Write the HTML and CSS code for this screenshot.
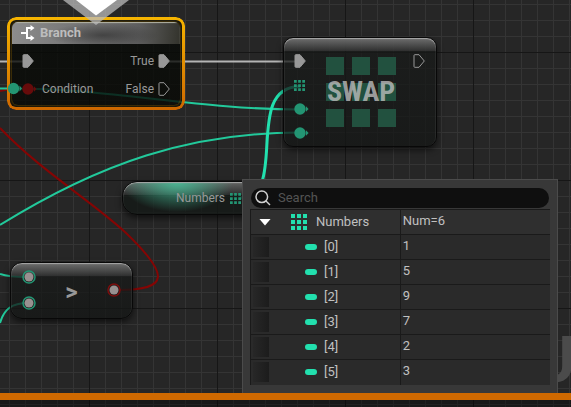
FILE: index.html
```html
<!DOCTYPE html>
<html lang="en">
<head>
<meta charset="utf-8">
<title>Blueprint debugger</title>
<link rel="stylesheet" href="styles.css">
</head>
<body>
<svg class="defs" aria-hidden="true">
  <symbol id="exec" viewBox="0 0 12 14"><path d="M1 1.5Q1 .7 1.8.7H6L11.3 7 6 13.3H1.8Q1 13.3 1 12.5Z"/></symbol>
  <symbol id="pin" viewBox="0 0 16 12"><circle cx="6" cy="6" r="5.7"/><path d="M12 3.2 14.6 6 12 8.8Z"/></symbol>
  <symbol id="array" viewBox="0 0 16 16"><path d="M0 0h4v4H0zM6 0h4v4H6zM12 0h4v4h-4zM0 6h4v4H0zM6 6h4v4H6zM12 6h4v4h-4zM0 12h4v4H0zM6 12h4v4H6zM12 12h4v4h-4z"/></symbol>
  <symbol id="ring" viewBox="0 0 14 14"><circle class="halo" cx="7" cy="7" r="6"/><circle class="core" cx="7" cy="7" r="4.5"/></symbol>
</svg>
<main class="canvas">
  <span class="watermark">U</span>
  <svg class="layer" aria-hidden="true">
    <g fill="none">
      <path class="w-exec" d="M0 61.5H24M165 61.5H300"/>
      <path class="w-bool" d="M0 91 12 88.5M0 128C40 170 90 200 125 232 170 275 170 290 118 290"/>
      <path class="w-int" d="M0 88.5H12C110 88.5 200 109.5 300 109.5M0 225C100 163 190 132.5 300 132.5M0 274C8 277 18 277 28 277M0 323C4 309 12 303 28 303"/>
      <path class="w-array" d="M240 198C290 198 242 86.5 300 86.5"/>
    </g>
  </svg>

  <section class="node branch">
    <div class="branch-body">
      <header class="branch-head">
        <svg width="14" height="16" viewBox="0 0 14 16" fill="none" stroke="#fff" stroke-width="2" aria-hidden="true"><path d="M0 8H5M11 3H6V13H11"/><path d="M9.500 0 13.500 3 9.500 6ZM9.500 10 13.500 13 9.500 16Z" fill="#fff" stroke="none"/></svg>
        <h2>Branch</h2>
      </header>
      <div class="branch-row">
        <svg class="exec on" width="12" height="14"><use href="#exec"/></svg>
        <span class="out">True</span>
        <svg class="exec on" width="12" height="14"><use href="#exec"/></svg>
      </div>
      <div class="branch-row">
        <svg class="pin red" width="16" height="12"><use href="#pin"/></svg>
        <span>Condition</span>
        <span class="out">False</span>
        <svg class="exec" width="12" height="14"><use href="#exec"/></svg>
      </div>
    </div>
  </section>

  <section class="node swap">
    <div class="pins">
      <svg class="exec on" width="12" height="14"><use href="#exec"/></svg>
      <svg class="arr" width="11" height="11"><use href="#array"/></svg>
      <svg class="pin" width="16" height="12"><use href="#pin"/></svg>
      <svg class="pin" width="16" height="12"><use href="#pin"/></svg>
    </div>
    <div class="emblem">
      <i></i><i></i><i></i><i></i><i></i><i></i><i></i><i></i><i></i>
      <h2>SWAP</h2>
    </div>
    <svg class="exec" width="12" height="14"><use href="#exec"/></svg>
  </section>

  <section class="node numbers">
    <span>Numbers</span>
    <svg class="arr" width="11" height="11"><use href="#array"/></svg>
  </section>

  <section class="node greater">
    <div class="rings">
      <svg class="ring" width="14" height="14"><use href="#ring"/></svg>
      <svg class="ring" width="14" height="14"><use href="#ring"/></svg>
    </div>
    <h2>&gt;</h2>
    <svg class="ring red" width="14" height="14"><use href="#ring"/></svg>
  </section>

  <svg class="layer" aria-hidden="true">
    <circle cx="13.500" cy="88.500" r="5.700" fill="#239573"/><path d="M19.500 85.500 22 88.500 19.500 91.500Z" fill="#239573"/>
    <path d="M63 0H129L96 25Z" fill="#bbb" fill-opacity=".75"/>
    <path d="M76 0H117L96 15.500Z" fill="#fff"/>
  </svg>

  <aside class="panel">
    <label class="search">
      <svg width="16" height="16" viewBox="0 0 16 16" fill="none" stroke="#d0d0d0" stroke-width="1.500" aria-hidden="true"><circle cx="6.800" cy="6.800" r="5.800"/><path d="M11 11 15 15"/></svg>
      <input type="search" placeholder="Search" aria-label="Search">
    </label>
    <table>
      <tbody>
        <tr class="top">
          <th scope="row"><div class="cell"><button type="button" aria-label="Collapse Numbers"></button><svg class="bright" width="16" height="16"><use href="#array"/></svg><span>Numbers</span></div></th>
          <td>Num=6</td>
        </tr>
        <tr><th scope="row"><div class="cell"><i class="handle"></i><i class="pill"></i><span>[0]</span></div></th><td>1</td></tr>
        <tr><th scope="row"><div class="cell"><i class="handle"></i><i class="pill"></i><span>[1]</span></div></th><td>5</td></tr>
        <tr><th scope="row"><div class="cell"><i class="handle"></i><i class="pill"></i><span>[2]</span></div></th><td>9</td></tr>
        <tr><th scope="row"><div class="cell"><i class="handle"></i><i class="pill"></i><span>[3]</span></div></th><td>7</td></tr>
        <tr><th scope="row"><div class="cell"><i class="handle"></i><i class="pill"></i><span>[4]</span></div></th><td>2</td></tr>
        <tr><th scope="row"><div class="cell"><i class="handle"></i><i class="pill"></i><span>[5]</span></div></th><td>3</td></tr>
      </tbody>
    </table>
  </aside>
</main>
<footer class="edge"></footer>
</body>
</html>
```
FILE: styles.css
```css
* { box-sizing: border-box; }

body {
  margin: 0;
  min-height: 100vh;
  display: flex;
  flex-direction: column;
  overflow: hidden;
  font: 13px/16px Roboto, "Liberation Sans", sans-serif;
  color: #c0c0c0;
  background-color: #262626;
  background-image:
    linear-gradient(90deg, #161616 1px, transparent 1px),
    linear-gradient(#161616 1px, transparent 1px),
    linear-gradient(90deg, #343434 1px, transparent 1px),
    linear-gradient(#343434 1px, transparent 1px);
  background-size: 128px 128px, 128px 128px, 16px 16px, 16px 16px;
  background-position: 89px 0, 0 52px, 9px 0, 0 4px;
}

h2 { margin: 0; font-size: 13px; line-height: 16px; }
svg { display: block; flex: none; }
.defs { position: absolute; width: 0; height: 0; }

.canvas { position: relative; flex: 1; overflow: hidden; }
.layer { position: absolute; inset: 0; width: 100%; height: 100%; pointer-events: none; }

.edge {
  height: 14px;
  border-top: 7px solid #cf6900;
  background: rgba(0, 0, 0, .35);
}

.watermark {
  position: absolute;
  left: 533px;
  bottom: 0;
  font-size: 64px;
  line-height: 64px;
  font-weight: 700;
  color: #4b4b4b;
}

.w-exec { stroke: #b4b4b4; stroke-width: 2; }
.w-bool { stroke: #850504; stroke-width: 2; }
.w-int { stroke: #22c99b; stroke-width: 2; }
.w-array { stroke: #22e0ae; stroke-width: 3; }

.node {
  position: absolute;
  display: flex;
  font-size: 12px;
  color: #989898;
  border: 1px solid #080808;
  background:
    linear-gradient(rgba(125, 125, 125, .85), rgba(60, 60, 60, .6)) top / 100% 13px no-repeat,
    linear-gradient(rgba(24, 26, 25, .75), rgba(20, 22, 21, .75));
  box-shadow: 0 3px 6px rgba(0, 0, 0, .6), inset 0 1px 1px #a8a8a8;
}

.exec { fill: none; stroke: #989898; }
.exec.on { fill: #989898; }
.pin, .arr { fill: #239573; }
.pin.red { fill: #660b0b; }
.bright { fill: #22e0ae; }
.ring { fill: none; stroke: #239573; stroke-width: 1.5px; }
.ring.red { stroke: #7c0d0d; }
.core { fill: #989090; stroke: none; }

.branch {
  left: 7px;
  top: 17px;
  width: 178px;
  padding: 2px;
  border: 3px solid transparent;
  border-radius: 9px;
  background: linear-gradient(rgba(8, 11, 8, .8), rgba(8, 9, 5, .8)) padding-box;
  box-shadow: none;
}
.branch::before {
  content: "";
  position: absolute;
  inset: -3px;
  border-radius: 9px;
  padding: 3px;
  background: linear-gradient(#f7b500, #cd6700);
  mask: linear-gradient(#000 0 0) content-box exclude, linear-gradient(#000 0 0);
}
.branch-body {
  flex: 1;
  padding-bottom: 5px;
  border-radius: 6px;
  overflow: hidden;
  box-shadow: 0 0 3px #8a6200;
}
.branch-head {
  display: flex;
  align-items: center;
  gap: 5px;
  height: 22px;
  padding-left: 9px;
  color: #bdbdbd;
  background:
    radial-gradient(ellipse 56px 12px at 54% 60%, rgba(40, 40, 40, .6), transparent),
    linear-gradient(95deg, #8c8c8c, #6c6c6c 55%, #5e5e5e 75%, #33332c);
  box-shadow: inset 0 1px 1px #b5b5a5;
}
.branch-row {
  display: flex;
  align-items: center;
  gap: 4px;
  height: 28px;
  padding: 6px 10px 0;
}
.out { margin-left: auto; }

.swap {
  left: 283px;
  top: 37px;
  width: 154px;
  height: 110px;
  padding: 16px 11px 0 10px;
  justify-content: space-between;
  border-radius: 10px;
}
.pins { display: grid; grid-template-rows: 14px 11px 12px 12px; row-gap: 12px; width: 14px; }
.emblem {
  display: grid;
  grid-template-columns: repeat(3, 18px);
  grid-auto-rows: 18px;
  gap: 8px;
  padding-top: 3px;
}
.emblem i { background: #22513f; }
.emblem h2 {
  position: absolute;
  left: 43px;
  top: 38px;
  font: 700 28px/32px "Roboto Condensed", "Liberation Sans Narrow", Roboto, sans-serif;
  color: rgba(190, 190, 190, .8);
}

.numbers {
  left: 122px;
  top: 181px;
  width: 150px;
  height: 34px;
  align-items: center;
  gap: 5px;
  padding-left: 53px;
  border-radius: 15px;
  background:
    radial-gradient(ellipse 56px 30px at 54px 0, rgba(70, 195, 155, .85), transparent),
    linear-gradient(rgba(120, 120, 120, .8), rgba(55, 55, 55, .6)) top / 100% 13px no-repeat,
    rgba(20, 25, 23, .8);
}

.greater {
  left: 10px;
  top: 262px;
  width: 123px;
  height: 57px;
  align-items: center;
  justify-content: space-between;
  padding: 0 11px 2px;
  border-radius: 12px;
}
.rings { display: grid; gap: 12px; }
.greater h2 { font-size: 24px; line-height: 24px; padding-top: 4px; }

.panel {
  position: absolute;
  left: 242px;
  top: 179px;
  width: 316px;
  padding: 8px 7px;
  border: 1px solid #4b4b4b;
  background: #383838;
}
.search {
  display: flex;
  align-items: center;
  gap: 7px;
  height: 20px;
  margin: 0 1px 1px;
  padding-left: 4px;
  border-radius: 10px;
  background: #0f0f0f;
}
.search input {
  flex: 1;
  min-width: 0;
  padding: 0;
  border: 0;
  outline: 0;
  background: none;
  color: #c0c0c0;
  font: inherit;
}
.search input::placeholder { color: #545454; opacity: 1; }

table { width: 100%; border-collapse: collapse; table-layout: fixed; }
tr { height: 25px; background: #2a2a2a; }
tr.top { background: #2f2f2f; }
th, td {
  padding: 0;
  border-top: 1px solid #1a1a1a;
  border-left: 1px solid #1a1a1a;
  font-weight: 400;
  text-align: left;
}
th { width: 50%; }
td { padding: 0 0 2px 2px; }
.cell { display: flex; align-items: center; height: 24px; }
.cell button {
  width: 12px;
  height: 7px;
  margin: 0 20px 0 8px;
  padding: 0;
  border: 0;
  background: #fff;
  clip-path: polygon(0 0, 100% 0, 50% 100%);
}
.cell svg { margin-right: 9px; }
.handle { width: 16px; height: 20px; margin: 0 36px 0 2px; background: linear-gradient(90deg, #272727, #1c1c1c); }
.pill { width: 12px; height: 6px; margin-right: 7px; border-radius: 3px; background: #22e0ae; }
```
